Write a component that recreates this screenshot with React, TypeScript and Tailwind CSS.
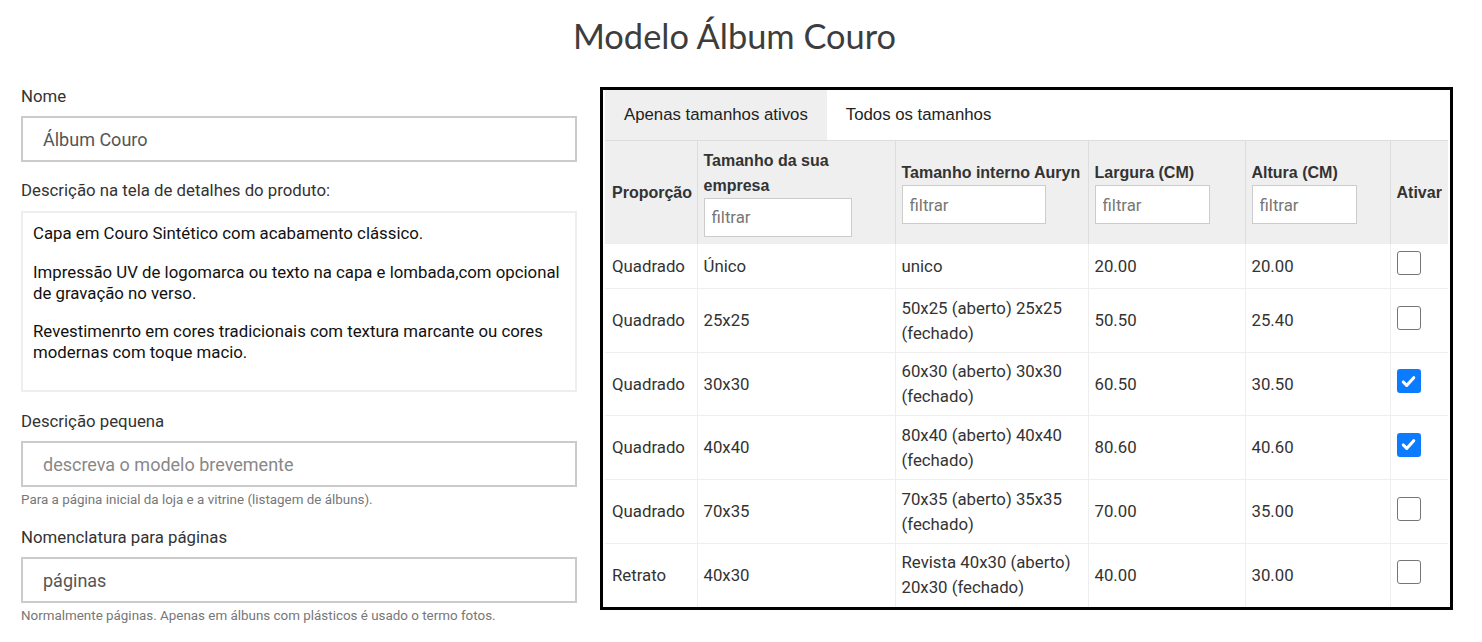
import React from 'react'

type Row = {
  ratio: string
  size: string
  inner: string
  width: string
  height: string
  active: boolean
}

const rows: Row[] = [
  { ratio: 'Quadrado', size: 'Único', inner: 'unico', width: '20.00', height: '20.00', active: false },
  { ratio: 'Quadrado', size: '25x25', inner: '50x25 (aberto) 25x25 (fechado)', width: '50.50', height: '25.40', active: false },
  { ratio: 'Quadrado', size: '30x30', inner: '60x30 (aberto) 30x30 (fechado)', width: '60.50', height: '30.50', active: true },
  { ratio: 'Quadrado', size: '40x40', inner: '80x40 (aberto) 40x40 (fechado)', width: '80.60', height: '40.60', active: true },
  { ratio: 'Quadrado', size: '70x35', inner: '70x35 (aberto) 35x35 (fechado)', width: '70.00', height: '35.00', active: false },
  { ratio: 'Retrato', size: '40x30', inner: 'Revista 40x30 (aberto) 20x30 (fechado)', width: '40.00', height: '30.00', active: false },
]

const rowHeights = ['h-[45px]', 'h-[64px]', 'h-[63px]', 'h-[64px]', 'h-[64px]', 'h-[63px]']

function Checkbox({ checked }: { checked: boolean }) {
  if (checked) {
    return (
      <span className="mb-[6px] flex h-[24px] w-[24px] items-center justify-center rounded-[3px] bg-[#0b7bff]">
        <svg viewBox="0 0 16 16" className="h-[19px] w-[19px]" fill="none">
          <path d="M3.6 8.4l2.9 2.9L12.4 4.8" stroke="white" strokeWidth={2.6} strokeLinecap="round" strokeLinejoin="round" />
        </svg>
      </span>
    )
  }
  return <span className="mb-[6px] block h-[24px] w-[24px] rounded-[3px] border border-[#767676] bg-white" />
}

function Filter() {
  return (
    <input
      placeholder="filtrar"
      className="block h-[39px] w-4/5 border border-[#ccc] bg-white px-[7px] font-['Roboto',sans-serif] text-[16.8px] font-normal text-[#333] placeholder:text-[#777] outline-none"
    />
  )
}

function Field({ label, value, placeholder, help }: { label: string; value?: string; placeholder?: string; help?: string }) {
  return (
    <div>
      <div className="text-[16.8px] leading-[20px] text-[#333]">{label}</div>
      <input
        defaultValue={value}
        placeholder={placeholder}
        className="mt-[10px] block h-[46px] w-full border-2 border-[#cbcbcb] px-[20px] text-[18px] text-[#555] placeholder:text-[#888] outline-none"
      />
      {help && <div className="mt-[5px] text-[13.4px] leading-[16px] text-[#777]">{help}</div>}
    </div>
  )
}

export default function App() {
  return (
    <div className="min-h-screen bg-white font-['Roboto',sans-serif]">
      <h1 className="flex h-[86px] items-start justify-center pr-[13px] pt-[13px] font-['Lato',sans-serif] text-[34.4px] leading-[46px] font-normal text-[#3d3d3d]">
        Modelo Álbum Couro
      </h1>

      <div className="flex gap-[23px] px-[21px]">
        {/* left form */}
        <div className="w-[556px] shrink-0">
          <Field label="Nome" value="Álbum Couro" />

          <div className="mt-[18px] text-[16.8px] leading-[20px] text-[#333]">Descrição na tela de detalhes do produto:</div>
          <div className="mt-[11px] h-[181px] border-2 border-[#eee] px-[10px] pt-[10px] text-[16.8px] leading-[21px] text-[#111]">
            <p className="mb-[18px]">Capa em Couro Sintético com acabamento clássico.</p>
            <p className="mb-[17px]">Impressão UV de logomarca ou texto na capa e lombada,com opcional de gravação no verso.</p>
            <p>Revestimenrto em cores tradicionais com textura marcante ou cores modernas com toque macio.</p>
          </div>

          <div className="mt-[19px]">
            <Field
              label="Descrição pequena"
              placeholder="descreva o modelo brevemente"
              help="Para a página inicial da loja e a vitrine (listagem de álbuns)."
            />
          </div>
          <div className="mt-[19px]">
            <Field
              label="Nomenclatura para páginas"
              value="páginas"
              help="Normalmente páginas. Apenas em álbuns com plásticos é usado o termo fotos."
            />
          </div>
        </div>

        {/* sizes panel */}
        <div className="mt-[1px] h-[523px] w-[853px] shrink-0 border-[3px] border-black px-[2px]">
          <div className="flex h-[50px] font-['Liberation_Sans',Arial,sans-serif] text-[16.8px] text-[#222]">
            <div className="flex items-center bg-[#efefef] px-[19px]">Apenas tamanhos ativos</div>
            <div className="flex items-center px-[19px]">Todos os tamanhos</div>
          </div>

          <table className="w-[843px] table-fixed border-collapse text-[16.8px] text-[#333]">
            <colgroup>
              <col className="w-[92px]" />
              <col className="w-[198px]" />
              <col className="w-[193px]" />
              <col className="w-[157px]" />
              <col className="w-[145px]" />
              <col className="w-[58px]" />
            </colgroup>
            <thead>
              <tr className="h-[103px] border-t border-[#ddd] bg-[#efefef] font-['Liberation_Sans',Arial,sans-serif] text-[16px] font-bold leading-[25px] text-[#333]">
                <th className="border-r border-[#ddd] px-[7px] text-left align-middle">Proporção</th>
                <th className="border-r border-[#ddd] px-[6px] text-left align-middle">
                  <div>Tamanho da sua empresa</div>
                  <Filter />
                </th>
                <th className="border-r border-[#ddd] px-[6px] text-left align-middle">
                  <div className="whitespace-nowrap">Tamanho interno Auryn</div>
                  <Filter />
                </th>
                <th className="border-r border-[#ddd] px-[6px] text-left align-middle">
                  <div className="whitespace-nowrap">Largura (CM)</div>
                  <Filter />
                </th>
                <th className="border-r border-[#ddd] px-[6px] text-left align-middle">
                  <div className="whitespace-nowrap">Altura (CM)</div>
                  <Filter />
                </th>
                <th className="px-[6px] text-left align-middle">Ativar</th>
              </tr>
            </thead>
            <tbody className="leading-[25px]">
              {rows.map((r, i) => (
                <tr key={i} className={`${rowHeights[i]} border-t border-[#eee]`}>
                  <td className="border-r border-[#eee] px-[7px] align-middle">{r.ratio}</td>
                  <td className="border-r border-[#eee] px-[6px] align-middle">{r.size}</td>
                  <td className="border-r border-[#eee] px-[6px] align-middle">{r.inner}</td>
                  <td className="border-r border-[#eee] px-[6px] align-middle">{r.width}</td>
                  <td className="border-r border-[#eee] px-[6px] align-middle">{r.height}</td>
                  <td className="px-[6px] align-middle">
                    <Checkbox checked={r.active} />
                  </td>
                </tr>
              ))}
            </tbody>
          </table>
        </div>
      </div>
    </div>
  )
}
